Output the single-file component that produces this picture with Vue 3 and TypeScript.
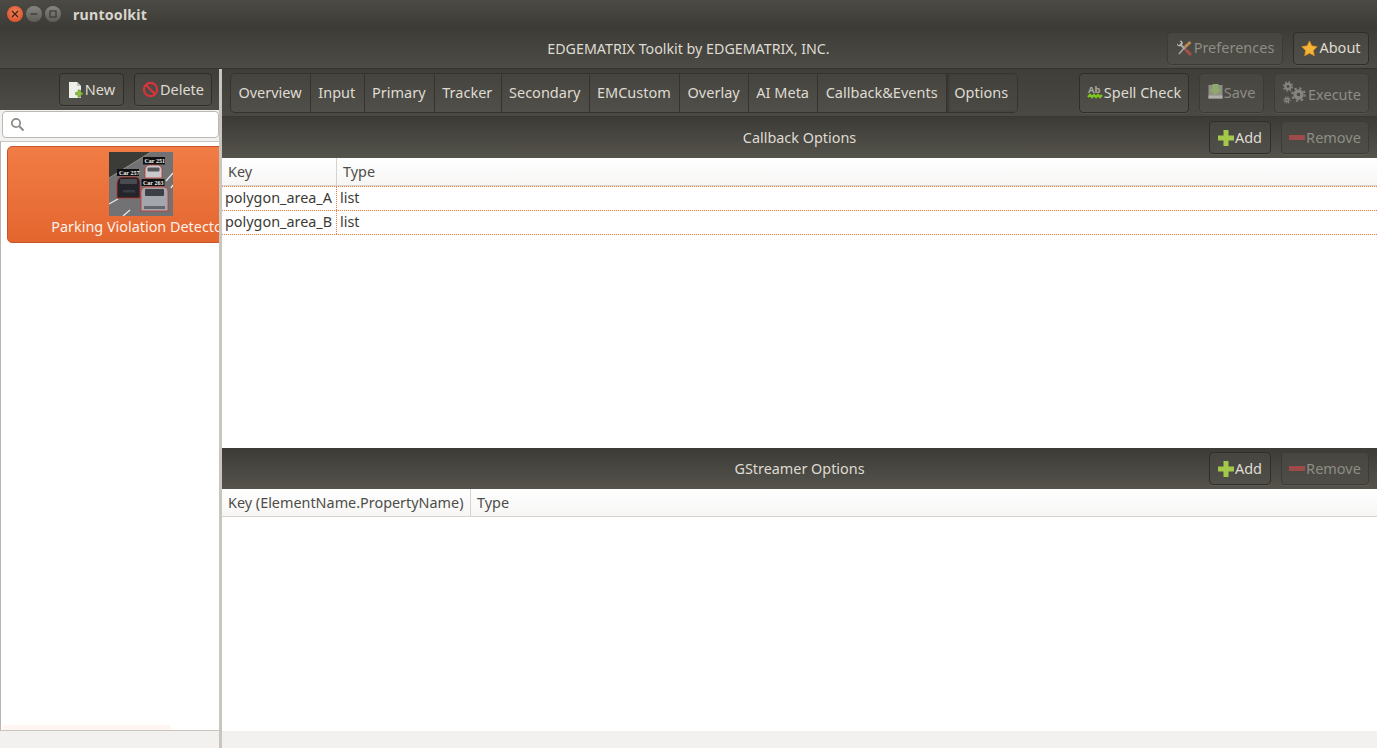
<script setup lang="ts">
const tabs = ["Overview", "Input", "Primary", "Tracker", "Secondary", "EMCustom", "Overlay", "AI Meta", "Callback&Events", "Options"];
const callbackRows = ["polygon_area_A", "polygon_area_B"];
</script>

<template>
  <div class="window">
    <div class="titlebar">
      <div class="win-buttons">
        <span class="win-btn close"><svg width="8" height="8" viewBox="0 0 8 8"><path d="M1 1l6 6M7 1l-6 6" stroke="#4a2012" stroke-width="1.3" /></svg></span>
        <span class="win-btn"><svg width="8" height="8" viewBox="0 0 8 8"><path d="M0.5 4h7" stroke="#3c3b37" stroke-width="1.3" /></svg></span>
        <span class="win-btn"><svg width="8" height="8" viewBox="0 0 8 8"><rect x="1" y="1" width="6" height="6" fill="none" stroke="#3c3b37" stroke-width="1.2" /></svg></span>
      </div>
      <span class="win-title">runtoolkit</span>
    </div>

    <div class="appbar">
      <span class="app-title">EDGEMATRIX Toolkit by EDGEMATRIX, INC.</span>
      <div class="appbar-actions">
        <button class="btn disabled prefs" type="button">
          <svg width="17" height="16" viewBox="0 0 17 16">
            <path d="M3 14l6-7" stroke="#a5a5a0" stroke-width="1.6" />
            <path d="M9 7l5.500-5" stroke="#c08a4e" stroke-width="3" />
            <path d="M4 4l5 5" stroke="#aaaaa5" stroke-width="2" />
            <path d="M9 9l6 6" stroke="#a5504a" stroke-width="3" />
            <path d="M1 3.500L2.500 5l2-.5.500-2L3.500 1l2-.5L7 3 5.500 6 3 6.500 1 5z" fill="#b5b5b0" />
          </svg>
          Preferences
        </button>
        <button class="btn about" type="button">
          <svg width="17" height="17" viewBox="0 0 18 18"><path d="M9 1l2.500 5.200 5.700.8-4.100 4 1 5.700L9 14l-5.100 2.700 1-5.700-4.100-4 5.700-.8z" fill="#f4b43a" stroke="#d98a1c" stroke-width=".8" /></svg>
          About
        </button>
      </div>
    </div>

    <div class="body">
      <aside class="sidebar">
        <div class="side-tools">
          <button class="btn new" type="button">
            <svg width="16" height="18" viewBox="0 0 16 18">
              <path d="M1 1h8l4 4v12H1z" fill="#eeeeea" />
              <path d="M9 1l4 4H9z" fill="#c4c4bf" />
              <path d="M10 9h2.400v2.400h2.400v2.400h-2.400v2.400H10v-2.400H7.600v-2.400H10z" fill="#8fbf3a" stroke="#4f7a16" stroke-width=".5" />
            </svg>
            New
          </button>
          <button class="btn delete" type="button">
            <svg width="17" height="17" viewBox="0 0 17 17">
              <circle cx="8.500" cy="8.500" r="6.600" fill="none" stroke="#d8333a" stroke-width="2.200" />
              <path d="M4 4l9 9" stroke="#d8333a" stroke-width="2.200" />
            </svg>
            Delete
          </button>
        </div>
        <div class="search-wrap">
          <div class="search">
            <svg width="15" height="15" viewBox="0 0 15 15"><circle cx="6" cy="6" r="4.200" fill="none" stroke="#8a8a86" stroke-width="1.700" /><path d="M9 9l4.500 4.500" stroke="#8a8a86" stroke-width="2" /></svg>
          </div>
        </div>
        <div class="app-list">
          <div class="app-card">
            <svg class="thumb" width="64" height="64" viewBox="0 0 64 64">
              <rect width="64" height="64" fill="#727274" />
              <path d="M0 0h42L0 26z" fill="#3b3b38" />
              <path d="M0 26L42 0" stroke="#8f8f88" stroke-width="1" />
              <path d="M0 52l9-5M14 64l7-6M64 21l-7 8M62 36l2-3" stroke="#e4e4e4" stroke-width="1.400" />
              <path d="M36 26v-9q1-4 4-4h9q3 0 4 4v9z" fill="#c9c9cb" stroke="#b8322a" stroke-width=".8" />
              <rect x="38.500" y="15.500" width="12" height="4" rx="1" fill="#55565a" />
              <path d="M8 46V31q1-6 5-6h14q4 0 4 6v15z" fill="#24252b" stroke="#c0302a" stroke-width=".8" />
              <rect x="11" y="27" width="17" height="5" rx="1" fill="#4a4b50" />
              <rect x="14" y="38" width="12" height="2.500" fill="#3a3b42" />
              <path d="M32 59V39q1-4 4-4h19q4 0 4 4v20z" fill="#a3a6ad" stroke="#cc3228" stroke-width=".8" />
              <rect x="36" y="37" width="19" height="7" rx="1" fill="#3d3f44" />
              <rect x="35" y="54" width="21" height="3" fill="#62666e" />
              <rect x="8" y="17" width="22" height="7" fill="#111" />
              <text x="10" y="22.500" class="thumb-label">Car 257</text>
              <rect x="34" y="5" width="22" height="7.500" fill="#111" />
              <text x="35.500" y="11" class="thumb-label">Car 251</text>
              <rect x="32.500" y="27" width="23" height="7" fill="#111" />
              <text x="34" y="32.500" class="thumb-label">Car 263</text>
            </svg>
            <span class="card-name">Parking Violation Detector</span>
          </div>
          <div class="overshoot"></div>
        </div>
      </aside>

      <main class="content">
        <div class="content-tools">
          <div class="tabs">
            <button v-for="tab in tabs" :key="tab" class="tab" :class="{ active: tab === 'Options' }" type="button">{{ tab }}</button>
          </div>
          <div class="content-actions">
            <button class="btn spell" type="button">
              <svg width="16" height="18" viewBox="0 -3 16 18">
                <text x="1" y="8" class="ab">Ab</text>
                <path d="M1 12l2-2 2 2 2-2 2 2 2-2 2 2 2-2" fill="none" stroke="#7fc41c" stroke-width="2.400" />
              </svg>
              Spell Check
            </button>
            <button class="btn disabled save" type="button">
              <svg width="15" height="17" viewBox="0 0 15 17">
                <path d="M0.500 2h14v13.500H0.500z" fill="#8f8f84" />
                <path d="M0.500 12.500h14v3h-14z" fill="#b0b0a6" />
                <path d="M4.500 1h6v5.500h3L7.500 12 1.500 6.500h3z" fill="#8dab6a" />
              </svg>
              Save
            </button>
            <button class="btn disabled execute" type="button">
              <svg width="25" height="24" viewBox="0 0 25 24">
                <g fill="none" stroke="#85857e">
                  <circle cx="6" cy="5.500" r="2.600" stroke-width="2.400" />
                  <circle cx="6" cy="5.500" r="4.500" stroke-width="1.400" stroke-dasharray="1.800 1.700" />
                  <circle cx="16.500" cy="13.500" r="3.500" stroke-width="3.400" />
                  <circle cx="16.500" cy="13.500" r="6.300" stroke-width="2" stroke-dasharray="2.300 2.650" />
                  <circle cx="5" cy="19" r="1.600" stroke-width="1.600" />
                  <circle cx="5" cy="19" r="3.100" stroke-width="1.200" stroke-dasharray="1.300 1.130" />
                </g>
              </svg>
              <span class="low-label">Execute</span>
            </button>
          </div>
        </div>

        <section class="panel first">
          <div class="panel-head">
            <span class="panel-title">Callback Options</span>
            <div class="panel-actions">
              <button class="btn add" type="button">
                <svg width="16" height="16" viewBox="0 0 16 16"><path d="M5.500 0h5v5.500H16v5h-5.500V16h-5v-5.500H0v-5h5.500z" fill="#a4c94a" /></svg>
                Add
              </button>
              <button class="btn disabled remove" type="button">
                <svg width="16" height="6" viewBox="0 0 16 6"><rect width="16" height="5" fill="#9e4a4a" /></svg>
                Remove
              </button>
            </div>
          </div>
          <div class="table-head">
            <span class="th key-col">Key</span>
            <span class="th">Type</span>
          </div>
          <div class="rows">
            <div v-for="row in callbackRows" :key="row" class="table-row">
              <span class="td key-col">{{ row }}</span>
              <span class="td">list</span>
            </div>
          </div>
        </section>

        <section class="panel">
          <div class="panel-head">
            <span class="panel-title">GStreamer Options</span>
            <div class="panel-actions">
              <button class="btn add" type="button">
                <svg width="16" height="16" viewBox="0 0 16 16"><path d="M5.500 0h5v5.500H16v5h-5.500V16h-5v-5.500H0v-5h5.500z" fill="#a4c94a" /></svg>
                Add
              </button>
              <button class="btn disabled remove" type="button">
                <svg width="16" height="6" viewBox="0 0 16 6"><rect width="16" height="5" fill="#9e4a4a" /></svg>
                Remove
              </button>
            </div>
          </div>
          <div class="table-head">
            <span class="th gst-col">Key (ElementName.PropertyName)</span>
            <span class="th">Type</span>
          </div>
        </section>
      </main>
    </div>

    <div class="statusbar">
      <div class="status-left"></div>
      <div class="status-right"></div>
    </div>
  </div>
</template>

<style>
html,
body {
  margin: 0;
  background: #fff;
}
</style>

<style scoped>
.window {
  display: flex;
  flex-direction: column;
  width: 1377px;
  height: 748px;
  overflow: hidden;
  font-family: "Noto Sans", "Open Sans", sans-serif;
  font-size: 14.4px;
  color: #dfdbd2;
  background: #fff;
}

.titlebar {
  display: flex;
  align-items: center;
  height: 28px;
  flex: none;
  padding-left: 7px;
  background: linear-gradient(#4b4a45, #3c3b37);
}

.win-buttons {
  display: flex;
  gap: 3px;
}

.win-btn {
  display: flex;
  align-items: center;
  justify-content: center;
  width: 16px;
  height: 16px;
  border-radius: 50%;
  background: linear-gradient(#86857f, #5c5b56);
}

.win-btn.close {
  background: radial-gradient(circle at 50% 40%, #f0835a, #d7461f);
}

.win-title {
  margin-left: 12px;
  font-weight: 700;
  font-size: 14.2px;
  letter-spacing: 0.2px;
  color: #d9d5cc;
}

.appbar {
  position: relative;
  display: flex;
  align-items: center;
  justify-content: flex-end;
  flex: none;
  height: 40px;
  padding-right: 8px;
  background: linear-gradient(#3d3c37, #4c4b45);
  border-bottom: 1px solid #34332f;
}

.app-title {
  position: absolute;
  left: 0;
  right: 0;
  text-align: center;
  font-size: 14.25px;
}

.appbar-actions,
.panel-actions,
.content-actions,
.side-tools {
  position: relative;
  display: flex;
  gap: 10px;
}

.btn {
  display: inline-flex;
  align-items: center;
  justify-content: center;
  gap: 1px;
  box-sizing: border-box;
  height: 33px;
  padding: 0 0 2px;
  border: 1px solid #2f2e2a;
  border-radius: 4px;
  background: linear-gradient(#464540, #504f49);
  color: #dfdbd2;
  font: inherit;
  font-size: 14.5px;
  box-shadow: 0 1px 0 rgba(255, 255, 255, 0.06);
}

.btn svg {
  margin-top: 2px;
}

.btn.disabled {
  border-color: #3c3b36;
  color: #8e8d85;
  background: linear-gradient(#474641, #4e4d47);
}

.prefs { width: 116px; }
.about { width: 76px; }
.new { width: 65px; }
.delete { width: 78px; }
.spell { width: 110px; height: 40px; }
.save { width: 65px; height: 40px; }
.execute { width: 95px; height: 40px; }
.add { width: 62px; }
.remove { width: 88px; }

.btn.spell svg {
  margin: 0 0 2px;
}

.btn.save svg {
  margin-top: 0;
}

.low-label {
  margin-top: 4px;
}

.body {
  display: flex;
  flex: 1;
  min-height: 0;
}

.sidebar {
  display: flex;
  flex-direction: column;
  width: 219px;
  flex: none;
  border-right: 3px solid #c9c6c0;
  background: #fff;
}

.side-tools {
  justify-content: flex-end;
  align-items: center;
  flex: none;
  height: 41px;
  padding-right: 7px;
  background: linear-gradient(#3f3e39, #4d4c46);
}

.search-wrap {
  flex: none;
  padding: 1px 0 3px 2px;
  background: #f2f1f0;
}

.search {
  display: flex;
  align-items: center;
  box-sizing: border-box;
  width: 217px;
  height: 27px;
  padding-left: 7px;
  border: 1px solid #bdb9b2;
  border-radius: 4px;
  background: #fff;
}

.app-list {
  position: relative;
  flex: 1;
  min-height: 0;
  padding: 4px 0 0 6px;
  overflow: hidden;
  box-sizing: border-box;
  border: 1px solid #c9c6c0;
  border-left-color: #b9b6af;
  border-right: 0;
}

.app-card {
  display: flex;
  flex-direction: column;
  align-items: center;
  box-sizing: border-box;
  width: 268px;
  height: 97px;
  padding-top: 5px;
  border: 1px solid #c9552a;
  border-radius: 5px;
  background: linear-gradient(#f17c45, #e4662f);
}

.thumb {
  flex: none;
}

.thumb-label {
  font-family: "Liberation Serif", serif;
  font-size: 6px;
  font-weight: 700;
  fill: #f4f4f4;
}

.card-name {
  margin-top: 1px;
  margin-right: 2px;
  white-space: nowrap;
  color: #fdf1ea;
}

.overshoot {
  position: absolute;
  left: 2px;
  bottom: 0;
  width: 168px;
  height: 5px;
  background: #fff6f2;
}

.content {
  display: flex;
  flex-direction: column;
  flex: 1;
  min-width: 0;
}

.content-tools {
  display: flex;
  align-items: center;
  justify-content: space-between;
  flex: none;
  height: 48px;
  padding: 0 8px;
  box-sizing: border-box;
  background: linear-gradient(#3f3e39, #4a4943);
  border-bottom: 1px solid #393834;
}

.tabs {
  display: flex;
  height: 40px;
  box-sizing: border-box;
  border: 1px solid #34332f;
  border-radius: 5px;
  overflow: hidden;
  background: linear-gradient(#45443f, #514f49);
}

.tab {
  padding: 0 8.300px 2px 7.400px;
  border: 0;
  border-right: 1px solid #34332f;
  background: transparent;
  color: #dfdbd2;
  font: inherit;
  font-size: 14.5px;
  white-space: nowrap;
}

.tab.active {
  border-right: 0;
  background: linear-gradient(#42413c, #4a4943);
  box-shadow: inset 2px 0 2px rgba(0, 0, 0, 0.18);
}

.panel {
  display: flex;
  flex-direction: column;
  flex: 1;
  min-height: 0;
  background: #fff;
}

.panel.first {
  flex: none;
  height: 331px;
}

.panel-head {
  position: relative;
  display: flex;
  align-items: center;
  justify-content: flex-end;
  flex: none;
  height: 41px;
  padding-right: 8px;
  box-sizing: border-box;
  background: linear-gradient(#3c3b36, #55534c);
}

.panel-title {
  position: absolute;
  left: 0;
  right: 0;
  text-align: center;
}

.table-head {
  display: flex;
  flex: none;
  height: 28px;
  box-sizing: border-box;
  border-bottom: 1px solid #d6d3ce;
  background: linear-gradient(#fff, #f7f6f5);
  color: #4e4d48;
}

.th {
  display: flex;
  align-items: center;
  padding: 0 6px;
}

.key-col {
  box-sizing: border-box;
  width: 115px;
  flex: none;
}

.th.key-col,
.gst-col {
  border-right: 1px solid #d6d3ce;
}

.gst-col {
  white-space: nowrap;
  box-sizing: border-box;
  width: 249px;
  flex: none;
}

.rows {
  border-top: 1px dotted #f0763c;
}

.table-row {
  display: flex;
  height: 24px;
  box-sizing: border-box;
  border-bottom: 1px dotted #f0763c;
  color: #3c3b37;
}

.td {
  display: flex;
  align-items: center;
  padding: 0 3px 2px;
}

.td.key-col {
  border-right: 1px dotted #f0763c;
  white-space: nowrap;
}

.ab {
  font-family: "Noto Sans", sans-serif;
  font-size: 9.500px;
  font-weight: 700;
  fill: #a8a89e;
}

.statusbar {
  display: flex;
  flex: none;
  height: 17px;
  background: #f2f1f0;
}

.status-left {
  width: 219px;
  border-right: 3px solid #c9c6c0;
}

.status-right {
  flex: 1;
}
</style>
